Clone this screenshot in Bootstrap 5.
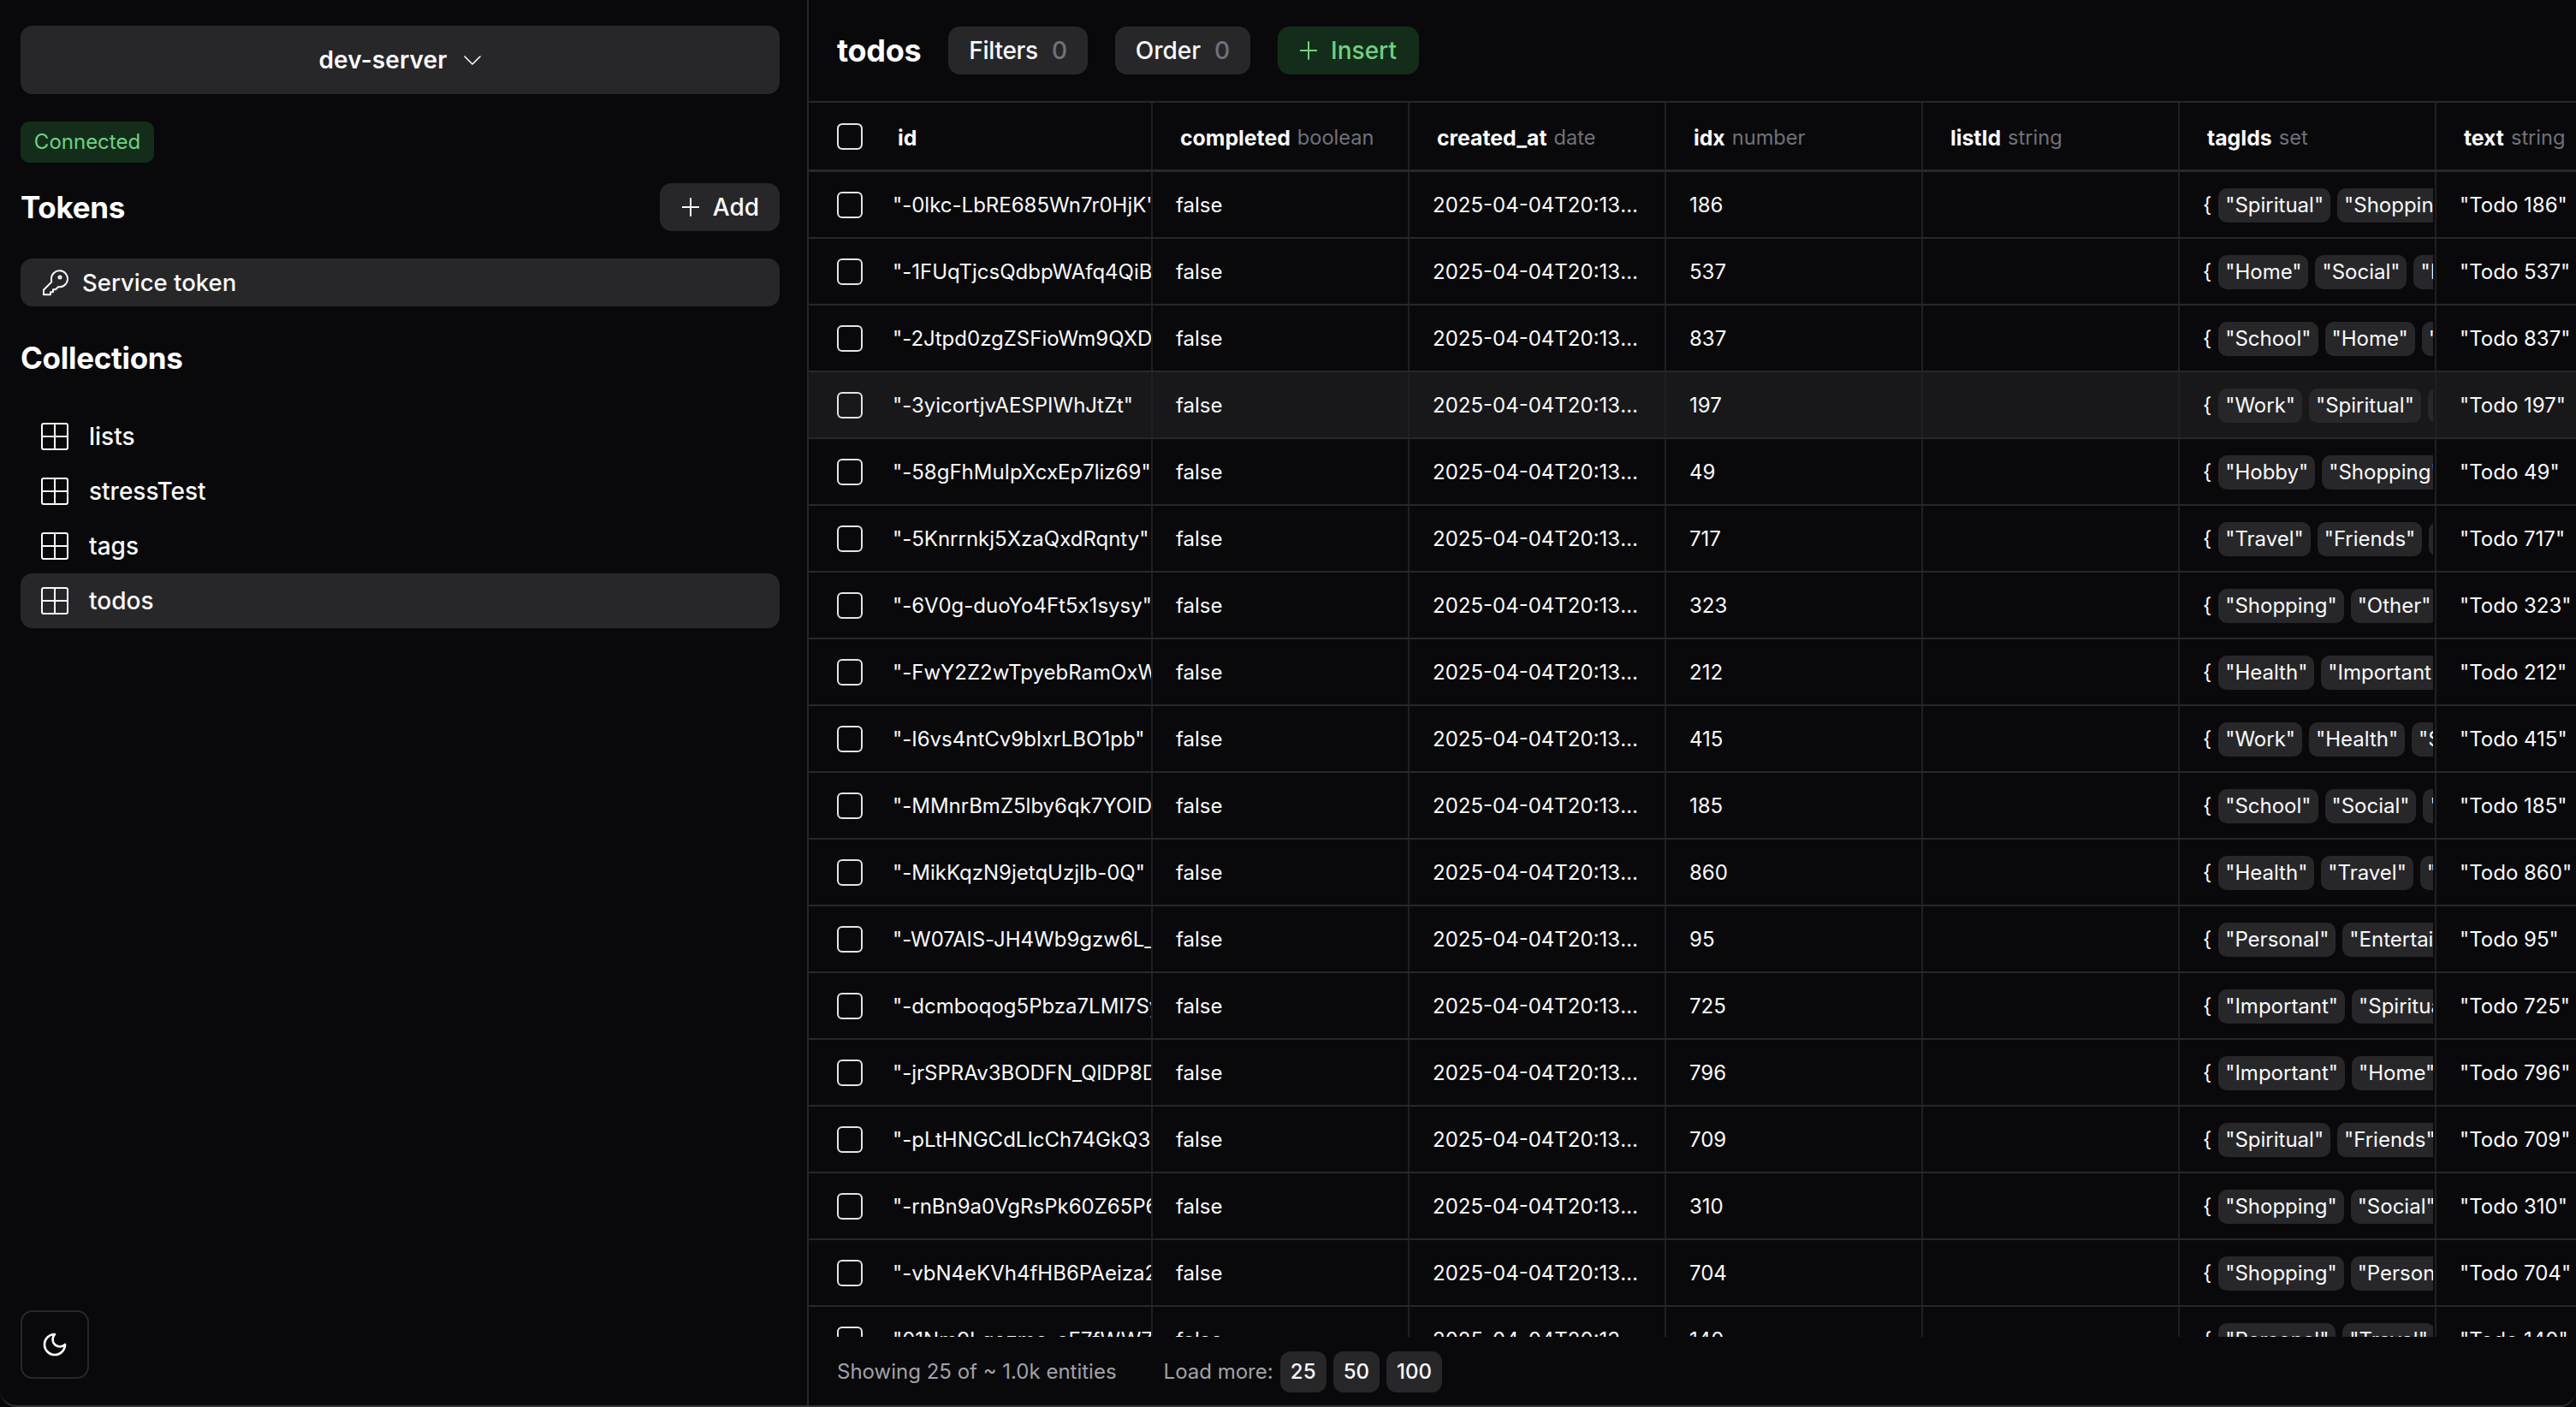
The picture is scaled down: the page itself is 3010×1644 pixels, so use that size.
<!doctype html>
<html lang="en" data-bs-theme="dark">
<head>
<meta charset="utf-8">
<title>todos</title>
<link href="https://cdn.jsdelivr.net/npm/bootstrap@5.3.0/dist/css/bootstrap.min.css" rel="stylesheet">
<style>
html,body{height:100%;}
body{background:#09090b;color:#fafafa;font-family:Inter,"Liberation Sans",sans-serif;font-size:24px;line-height:40px;overflow:hidden;}
.app-frame{height:1644px;border-bottom:2px solid #333336;border-radius:0 0 20px 20px;overflow:hidden;}
.side-pane{width:945px;flex:none;border-right:2px solid #27272a;padding:30px 32px 31px 24px;}
.soft-btn{background:#27272a;color:#fafafa;border:0;border-radius:14px;font-size:28px;font-weight:500;line-height:40px;height:56px;padding:0 24px;display:inline-flex;align-items:center;}
.soft-btn:hover,.soft-btn:active{background:#27272a!important;color:#fafafa!important;}
.server-btn{height:80px;width:100%;justify-content:center;font-weight:600;gap:20px;padding:0;letter-spacing:.1px;}
.state-pill{background:#142d1a;color:#71d083;border-radius:10px;height:48px;width:156px;font-size:24px;line-height:48px;text-align:center;margin-top:32px;}
.pane-title{font-size:35px;line-height:44px;font-weight:700;margin:0;letter-spacing:-.3px;}
.tok-head{margin-top:24px;height:56px;}
.add-btn{padding:0 24px 0 26px;gap:16px;}
.tok-row{background:#27272a;border-radius:14px;height:56px;margin-top:32px;padding:0 24px;gap:16px;font-size:27.500px;font-weight:500;}
.coll-title{margin-top:38px;}
.coll-list{margin-top:38px;}
.coll-item{height:64px;border-radius:14px;padding:0 24px;gap:24px;font-size:28px;font-weight:500;color:#fafafa;text-decoration:none;}
.coll-item.is-open{background:#27272a;}
.moon-btn{width:80px;height:80px;border:2px solid #27272a;border-radius:14px;background:transparent;padding:0;color:#fafafa;}
.main-pane{min-width:0;}
.top-bar{height:118px;padding:0 32px 0 33px;gap:32px;}
.tbl-title{font-size:36px;font-weight:700;margin:0;line-height:44px;letter-spacing:-.3px;}
.cnt{color:#71717a;margin-left:16px;}
.flt-btn{letter-spacing:-.3px;}
.ok-btn{background:#142d1a;color:#71d083;gap:16px;padding:0 26px;}
.ok-btn:hover,.ok-btn:active{background:#142d1a!important;color:#71d083!important;}
.data-view{flex:1 1 auto;min-height:0;overflow:hidden;border-top:2px solid #27272a;}
.data-row{width:2200px;height:78px;border-bottom:2px solid #27272a;}
.data-row.is-hover{background:#18181b;}
.head-row{height:81px;border-bottom-width:3px;}
.c-sel{width:100px;flex:none;}
.c-id{width:300px;flex:none;font-variant-ligatures:no-contextual;font-feature-settings:"calt" 0;}
.c-std{width:300px;flex:none;border-left:2px solid #1f1f22;}
.data-cell{height:100%;display:flex;align-items:center;overflow:hidden;white-space:nowrap;padding-left:27px;padding-top:2px;}
.c-sel.data-cell{padding:0 0 0 33px;}
.c-id.data-cell{padding-left:0;}
.id-text{margin-left:-2px;}
.head-row .data-cell{padding-left:32px;padding-top:3px;font-size:24.800px;font-weight:700;}
.head-row .c-sel.data-cell{padding:0 0 0 33px;}
.head-row .c-id.data-cell{padding-left:4px;}
.type-name{color:#71717a;font-weight:400;margin-left:8px;font-size:23.600px;}
.cut-text{overflow:hidden;text-overflow:ellipsis;width:240px;display:block;}
.tick{width:30px;height:31px;margin:0;background:transparent;border:2px solid #e4e4e7;border-radius:8px;}
.tick:focus{box-shadow:none;border-color:#e4e4e7;}
.tag-cell{padding-right:2px;}
.tag-wrap{display:flex;gap:8px;overflow:hidden;margin-left:8px;flex:1;min-width:0;}
.tag-chip{background:#27272a;border-radius:10px;height:40px;line-height:40px;padding:0 8px;flex:none;}
.foot-bar{height:79px;flex:none;padding:0 32px 0 33px;color:#a1a1aa;background:#09090b;font-size:24px;}
.foot-gap{margin-left:55px;margin-right:8px;}
.num-btn{height:48px;padding:0 12px;min-width:54px;justify-content:center;font-size:24px;border-radius:12px;font-weight:500;margin-right:8px;}
.ico{fill:none;stroke:currentColor;stroke-width:2;stroke-linecap:round;stroke-linejoin:round;flex:none;display:block;}
.ico-thin{stroke-width:1.600;}
.data-body{height:1361px;overflow:hidden;}
</style>
</head>
<body>
<svg width="0" height="0" class="position-absolute">
<symbol id="i-plus" viewBox="0 0 20 22"><path d="M10 1v20M0 11h20"/></symbol>
<symbol id="i-grid" viewBox="0 0 32 32"><rect x="1" y="1" width="30" height="30" rx="2"/><path d="M16 1v30M1 16h30"/></symbol>
</svg>
<div class="app-frame d-flex">
  <aside class="side-pane d-flex flex-column">
    <button type="button" class="btn soft-btn server-btn">dev-server
      <svg class="ico ico-thin" width="20" height="11" viewBox="0 0 20 11"><path d="M1 1l9 9 9-9"/></svg>
    </button>
    <div class="state-pill">Connected</div>
    <div class="tok-head d-flex justify-content-between align-items-center">
      <h2 class="pane-title">Tokens</h2>
      <button type="button" class="btn soft-btn add-btn"><svg class="ico" width="20" height="22"><use href="#i-plus"/></svg>Add</button>
    </div>
    <div class="tok-row d-flex align-items-center">
      <svg class="ico" width="32" height="32" viewBox="0 0 32 32"><path d="M12 12a9.500 9.500 0 1 1 8 9.200l-3 3h-3v3h-3v3H3v-5.500l9.300-9.300A9.500 9.500 0 0 1 12 12z"/><circle cx="22" cy="10" r="1.500"/></svg>
      <span>Service token</span>
    </div>
    <h2 class="pane-title coll-title">Collections</h2>
    <nav class="coll-list d-flex flex-column">
      <a class="coll-item d-flex align-items-center" href="#"><svg class="ico" width="32" height="32"><use href="#i-grid"/></svg>lists</a>
      <a class="coll-item d-flex align-items-center" href="#"><svg class="ico" width="32" height="32"><use href="#i-grid"/></svg>stressTest</a>
      <a class="coll-item d-flex align-items-center" href="#"><svg class="ico" width="32" height="32"><use href="#i-grid"/></svg>tags</a>
      <a class="coll-item is-open d-flex align-items-center" href="#"><svg class="ico" width="32" height="32"><use href="#i-grid"/></svg>todos</a>
    </nav>
    <div class="mt-auto">
      <button type="button" class="btn moon-btn d-flex align-items-center justify-content-center" aria-label="Theme">
        <svg class="ico" width="32" height="32" viewBox="0 0 24 24"><path d="M12 3a6 6 0 0 0 9 9 9 9 0 1 1-9-9z"/></svg>
      </button>
    </div>
  </aside>
  <main class="main-pane flex-grow-1 d-flex flex-column">
    <div class="top-bar d-flex align-items-center flex-shrink-0">
      <h1 class="tbl-title">todos</h1>
      <button type="button" class="btn soft-btn flt-btn">Filters<span class="cnt">0</span></button>
      <button type="button" class="btn soft-btn">Order<span class="cnt">0</span></button>
      <button type="button" class="btn soft-btn ok-btn"><svg class="ico" width="20" height="22"><use href="#i-plus"/></svg>Insert</button>
    </div>
    <div class="data-view">
      <div class="data-row head-row d-flex">
        <div class="c-sel data-cell"><input class="form-check-input tick" type="checkbox" aria-label="Select all"></div>
        <div class="c-id data-cell">id</div>
        <div class="c-std data-cell">completed<span class="type-name">boolean</span></div>
        <div class="c-std data-cell">created_at<span class="type-name">date</span></div>
        <div class="c-std data-cell">idx<span class="type-name">number</span></div>
        <div class="c-std data-cell">listId<span class="type-name">string</span></div>
        <div class="c-std data-cell">tagIds<span class="type-name">set</span></div>
        <div class="c-std data-cell">text<span class="type-name">string</span></div>
      </div>
      <div class="data-body" id="rows"></div>
    </div>
    <div class="foot-bar d-flex align-items-center">
      <span>Showing 25 of ~ 1.0k entities</span>
      <span class="foot-gap">Load more:</span>
      <button type="button" class="btn soft-btn num-btn">25</button>
      <button type="button" class="btn soft-btn num-btn">50</button>
      <button type="button" class="btn soft-btn num-btn">100</button>
    </div>
  </main>
</div>
<script>
var data=[
['"-0lkc-LbRE685Wn7r0HjK"',186,['Spiritual','Shopping']],
['"-1FUqTjcsQdbpWAfq4QiB"',537,['Home','Social','Important']],
['"-2Jtpd0zgZSFioWm9QXD"',837,['School','Home','Work']],
['"-3yicortjvAESPIWhJtZt"',197,['Work','Spiritual','Home']],
['"-58gFhMuIpXcxEp7liz69"',49,['Hobby','Shopping']],
['"-5Knrrnkj5XzaQxdRqnty"',717,['Travel','Friends','Home']],
['"-6V0g-duoYo4Ft5x1sysy"',323,['Shopping','Other']],
['"-FwY2Z2wTpyebRamOxW"',212,['Health','Important']],
['"-I6vs4ntCv9bIxrLBO1pb"',415,['Work','Health','Social']],
['"-MMnrBmZ5lby6qk7YOID"',185,['School','Social','Home']],
['"-MikKqzN9jetqUzjIb-0Q"',860,['Health','Travel','Home']],
['"-W07AlS-JH4Wb9gzw6L_"',95,['Personal','Entertainment']],
['"-dcmboqog5Pbza7LMI7Sy"',725,['Important','Spiritual']],
['"-jrSPRAv3BODFN_QlDP8D"',796,['Important','Home']],
['"-pLtHNGCdLIcCh74GkQ3"',709,['Spiritual','Friends']],
['"-rnBn9a0VgRsPk60Z65P6"',310,['Shopping','Social']],
['"-vbN4eKVh4fHB6PAeiza2"',704,['Shopping','Personal']],
['"01Nm9Lgozme_eE7fWW76"',140,['Personal','Travel']]];
document.getElementById('rows').innerHTML=data.map(function(r,i){
return '<div class="data-row d-flex'+(i==3?' is-hover':'')+'"><div class="c-sel data-cell"><input class="form-check-input tick" type="checkbox" aria-label="Select row"></div><div class="c-id data-cell"><span class="id-text">'+r[0]+'</span></div><div class="c-std data-cell">false</div><div class="c-std data-cell"><span class="cut-text">2025-04-04T20:13:05.000Z</span></div><div class="c-std data-cell">'+r[1]+'</div><div class="c-std data-cell"></div><div class="c-std data-cell tag-cell">{<div class="tag-wrap">'+r[2].map(function(t){return '<span class="tag-chip">"'+t+'"</span>'}).join('')+'</div></div><div class="c-std data-cell">"Todo '+r[1]+'"</div></div>';
}).join('');
</script>
<script src="https://cdn.jsdelivr.net/npm/bootstrap@5.3.0/dist/js/bootstrap.bundle.min.js"></script>
</body>
</html>
